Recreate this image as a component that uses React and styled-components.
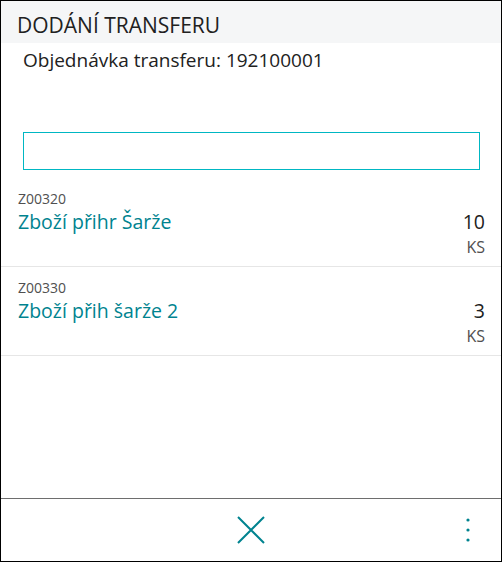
import React from "react";
import styled, { createGlobalStyle } from "styled-components";

const GlobalStyle = createGlobalStyle`
  html, body {
    margin: 0;
    padding: 0;
    background: #fff;
  }
  body {
    font-family: "Open Sans", "Noto Sans", sans-serif;
  }
`;

const Screen = styled.div`
  width: 502px;
  height: 562px;
  box-sizing: border-box;
  border: 1px solid #000;
  display: flex;
  flex-direction: column;
  background: #fff;
  overflow: hidden;
`;

const Header = styled.div`
  height: 42px;
  box-sizing: border-box;
  padding: 5px 0 0 16px;
  background: #f5f6f7;
  display: flex;
  align-items: center;
  font-size: 21px;
  color: #212121;
`;

const Subtitle = styled.div`
  padding: 4px 0 0 22px;
  font-size: 19px;
  color: #212121;
  line-height: 26px;
`;

const SearchWrap = styled.div`
  padding: 59px 21px 0 22px;
`;

const SearchInput = styled.input`
  display: block;
  width: 100%;
  height: 38px;
  box-sizing: border-box;
  border: 1px solid #00b7c3;
  outline: none;
  font-family: inherit;
  font-size: 16px;
  padding: 0 8px;
`;

const List = styled.div`
  margin-top: 8px;
  display: flex;
  flex-direction: column;
`;

const Row = styled.div`
  display: flex;
  justify-content: space-between;
  padding: 11px 16px 8px 17px;
  border-bottom: 1px solid #e6e6e6;
`;

const RowMain = styled.div`
  display: flex;
  flex-direction: column;
`;

const Code = styled.div`
  font-size: 14px;
  line-height: 20px;
  color: #505050;
`;

const Name = styled.div`
  font-size: 19.5px;
  line-height: 26px;
  color: #00838f;
`;

const Qty = styled.div`
  display: flex;
  flex-direction: column;
  align-items: flex-end;
  padding-top: 20px;
`;

const Amount = styled.div`
  font-size: 19.5px;
  line-height: 26px;
  color: #212121;
`;

const Unit = styled.div`
  margin-top: 1px;
  font-size: 16px;
  line-height: 22px;
  color: #505050;
`;

const Spacer = styled.div`
  flex: 1;
`;

const Footer = styled.div`
  height: 62px;
  border-top: 1px solid #6e6e6e;
  display: grid;
  grid-template-columns: 1fr auto 1fr;
  align-items: center;
`;

const IconButton = styled.button`
  background: none;
  border: none;
  padding: 0;
  display: flex;
  align-items: center;
  justify-content: center;
  color: #00838f;
  cursor: pointer;
  justify-self: ${(p) => p.$align || "center"};
  margin-right: ${(p) => p.$mr || 0}px;
`;

const items = [
  { code: "Z00320", name: "Zboží přihr Šarže", qty: 10, unit: "KS" },
  { code: "Z00330", name: "Zboží přih šarže 2", qty: 3, unit: "KS" },
];

export default function App() {
  return (
    <>
      <GlobalStyle />
      <Screen>
        <Header>DODÁNÍ TRANSFERU</Header>
        <Subtitle>Objednávka transferu: 192100001</Subtitle>
        <SearchWrap>
          <SearchInput />
        </SearchWrap>
        <List>
          {items.map((it) => (
            <Row key={it.code}>
              <RowMain>
                <Code>{it.code}</Code>
                <Name>{it.name}</Name>
              </RowMain>
              <Qty>
                <Amount>{it.qty}</Amount>
                <Unit>{it.unit}</Unit>
              </Qty>
            </Row>
          ))}
        </List>
        <Spacer />
        <Footer>
          <span />
          <IconButton aria-label="Zavřít">
            <svg width="28" height="28" viewBox="0 0 28 28">
              <path d="M1 1 L27 27 M27 1 L1 27" stroke="currentColor" strokeWidth="2" fill="none" />
            </svg>
          </IconButton>
          <IconButton aria-label="Další" $align="end" $mr={30}>
            <svg width="6" height="26" viewBox="0 0 6 26">
              <circle cx="3" cy="3" r="1.6" fill="currentColor" />
              <circle cx="3" cy="13" r="1.6" fill="currentColor" />
              <circle cx="3" cy="23" r="1.6" fill="currentColor" />
            </svg>
          </IconButton>
        </Footer>
      </Screen>
    </>
  );
}
